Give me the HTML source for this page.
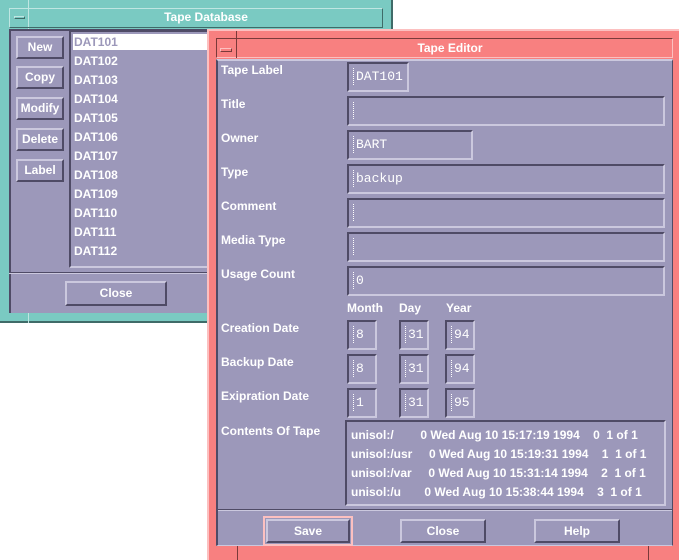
<!DOCTYPE html>
<html><head><meta charset="utf-8"><style>
*{margin:0;padding:0;box-sizing:border-box}
body{width:679px;height:560px;background:#fff;position:relative;overflow:hidden;font-family:"Liberation Sans",sans-serif;font-weight:bold;font-size:12px;color:#fff}
.a{position:absolute}
.bg{background:#9c98ba}
.out{border-style:solid;border-width:2px;border-color:#cbc8de #4f4b66 #4f4b66 #cbc8de}
.in{border-style:solid;border-width:2px;border-color:#4f4b66 #cbc8de #cbc8de #4f4b66}
.btn{text-align:center;line-height:19px}
.fld{font-family:"Liberation Mono",monospace;font-weight:normal;font-size:13px;padding-left:4px;line-height:25px}
.cur{display:inline-block;width:2px;height:17px;border-left:1px dotted #fff;vertical-align:middle;margin-right:1px}
.lbl{font-size:12px}
</style></head><body>

<div class="a" style="left:0;top:0;width:393px;height:323px;background:#7acac2;border-right:2px solid #3f6b68;border-bottom:2px solid #3f6b68"></div>
<div class="a" style="left:28px;top:0;width:1px;height:323px;background:#bfe6e2"></div>
<div class="a" style="left:9px;top:8px;width:374px;height:20px;border:1px solid #bfe6e2;border-right-color:#3f6b68;border-bottom-color:#3f6b68"></div>
<div class="a" style="left:14px;top:16px;width:11px;height:3px;border:1px solid #3f6b68;border-top-color:#bfe6e2;border-left-color:#bfe6e2"></div>
<div class="a" style="left:120px;top:10px;width:172px;text-align:center;font-size:12px">Tape Database</div>
<div class="a bg" style="left:9px;top:29px;width:375px;height:284px;border-top:2px solid #4f4b66;border-left:2px solid #4f4b66"></div>
<div class="a" style="left:9px;top:272px;width:375px;height:2px;border-top:1px solid #4f4b66;border-bottom:1px solid #cbc8de"></div>

<div class="a out btn bg" style="left:16px;top:36px;width:48px;height:23px">New</div>
<div class="a out btn bg" style="left:16px;top:66px;width:48px;height:23px">Copy</div>
<div class="a out btn bg" style="left:16px;top:97px;width:48px;height:23px">Modify</div>
<div class="a out btn bg" style="left:16px;top:128px;width:48px;height:23px">Delete</div>
<div class="a out btn bg" style="left:16px;top:159px;width:48px;height:23px">Label</div>

<div class="a in bg" style="left:69px;top:30px;width:180px;height:238px"></div>
<div class="a" style="left:73px;top:34px;width:140px;height:16px;background:#fff;color:#9c98ba;padding-left:1px;line-height:16px">DAT101</div>
<div class="a" style="left:74px;top:52px;line-height:19px">DAT102<br>DAT103<br>DAT104<br>DAT105<br>DAT106<br>DAT107<br>DAT108<br>DAT109<br>DAT110<br>DAT111<br>DAT112</div>
<div class="a out btn bg" style="left:65px;top:281px;width:102px;height:25px;line-height:21px">Close</div>

<div class="a" style="left:207px;top:29px;width:472px;height:531px;background:#f88080;border-left:2px solid #fcc0c0;border-top:2px solid #fcc0c0"></div>
<div class="a" style="left:216px;top:38px;width:457px;height:20px;border:1px solid #7a3a3a;border-right-color:#fcc0c0;border-bottom-color:#fcc0c0"></div>
<div class="a" style="left:236px;top:31px;width:1px;height:27px;background:#7a3a3a"></div>
<div class="a" style="left:220px;top:48px;width:12px;height:4px;border:1px solid #7a3a3a;border-top-color:#fcc0c0;border-left-color:#fcc0c0"></div>
<div class="a" style="left:360px;top:41px;width:180px;text-align:center;font-size:12px">Tape Editor</div>
<div class="a bg" style="left:216px;top:59px;width:457px;height:487px;border-top:2px solid #cbc8de;border-left:2px solid #4f4b66;border-right:1px solid #4f4b66;border-bottom:1px solid #cbc8de"></div>

<div class="a lbl" style="left:221px;top:63px">Tape Label</div>
<div class="a lbl" style="left:221px;top:97px">Title</div>
<div class="a lbl" style="left:221px;top:131px">Owner</div>
<div class="a lbl" style="left:221px;top:165px">Type</div>
<div class="a lbl" style="left:221px;top:199px">Comment</div>
<div class="a lbl" style="left:221px;top:233px">Media Type</div>
<div class="a lbl" style="left:221px;top:267px">Usage Count</div>
<div class="a lbl" style="left:221px;top:321px">Creation Date</div>
<div class="a lbl" style="left:221px;top:355px">Backup Date</div>
<div class="a lbl" style="left:221px;top:389px">Exipration Date</div>
<div class="a lbl" style="left:221px;top:424px">Contents Of Tape</div>

<div class="a in bg fld" style="left:347px;top:62px;width:62px;height:30px"><span class="cur"></span>DAT101</div>
<div class="a in bg fld" style="left:347px;top:96px;width:318px;height:30px"><span class="cur"></span></div>
<div class="a in bg fld" style="left:347px;top:130px;width:126px;height:30px"><span class="cur"></span>BART</div>
<div class="a in bg fld" style="left:347px;top:164px;width:318px;height:30px"><span class="cur"></span>backup</div>
<div class="a in bg fld" style="left:347px;top:198px;width:318px;height:30px"><span class="cur"></span></div>
<div class="a in bg fld" style="left:347px;top:232px;width:318px;height:30px"><span class="cur"></span></div>
<div class="a in bg fld" style="left:347px;top:266px;width:318px;height:30px"><span class="cur"></span>0</div>

<div class="a lbl" style="left:347px;top:301px">Month</div>
<div class="a lbl" style="left:399px;top:301px">Day</div>
<div class="a lbl" style="left:446px;top:301px">Year</div>

<div class="a in bg fld" style="left:347px;top:320px;width:30px;height:30px"><span class="cur"></span>8</div>
<div class="a in bg fld" style="left:399px;top:320px;width:30px;height:30px"><span class="cur"></span>31</div>
<div class="a in bg fld" style="left:445px;top:320px;width:30px;height:30px"><span class="cur"></span>94</div>
<div class="a in bg fld" style="left:347px;top:354px;width:30px;height:30px"><span class="cur"></span>8</div>
<div class="a in bg fld" style="left:399px;top:354px;width:30px;height:30px"><span class="cur"></span>31</div>
<div class="a in bg fld" style="left:445px;top:354px;width:30px;height:30px"><span class="cur"></span>94</div>
<div class="a in bg fld" style="left:347px;top:388px;width:30px;height:30px"><span class="cur"></span>1</div>
<div class="a in bg fld" style="left:399px;top:388px;width:30px;height:30px"><span class="cur"></span>31</div>
<div class="a in bg fld" style="left:445px;top:388px;width:30px;height:30px"><span class="cur"></span>95</div>

<div class="a in bg" style="left:345px;top:420px;width:321px;height:86px"></div>
<div class="a" style="left:351px;top:426px;line-height:19px;white-space:pre;font-size:12px">unisol:/        0 Wed Aug 10 15:17:19 1994    0  1 of 1
unisol:/usr     0 Wed Aug 10 15:19:31 1994    1  1 of 1
unisol:/var     0 Wed Aug 10 15:31:14 1994    2  1 of 1
unisol:/u       0 Wed Aug 10 15:38:44 1994    3  1 of 1</div>

<div class="a" style="left:218px;top:509px;width:454px;height:2px;border-top:1px solid #4f4b66;border-bottom:1px solid #cbc8de"></div>
<div class="a" style="left:263px;top:516px;width:90px;height:30px;border:2px solid #fcc0c0"></div>
<div class="a out btn bg" style="left:266px;top:519px;width:84px;height:24px;line-height:20px">Save</div>
<div class="a out btn bg" style="left:400px;top:519px;width:86px;height:24px;line-height:20px">Close</div>
<div class="a out btn bg" style="left:534px;top:519px;width:86px;height:24px;line-height:20px">Help</div>
<div class="a" style="left:237px;top:546px;width:1px;height:14px;background:#7a3a3a"></div>
<div class="a" style="left:648px;top:546px;width:1px;height:14px;background:#7a3a3a"></div>
</body></html>
